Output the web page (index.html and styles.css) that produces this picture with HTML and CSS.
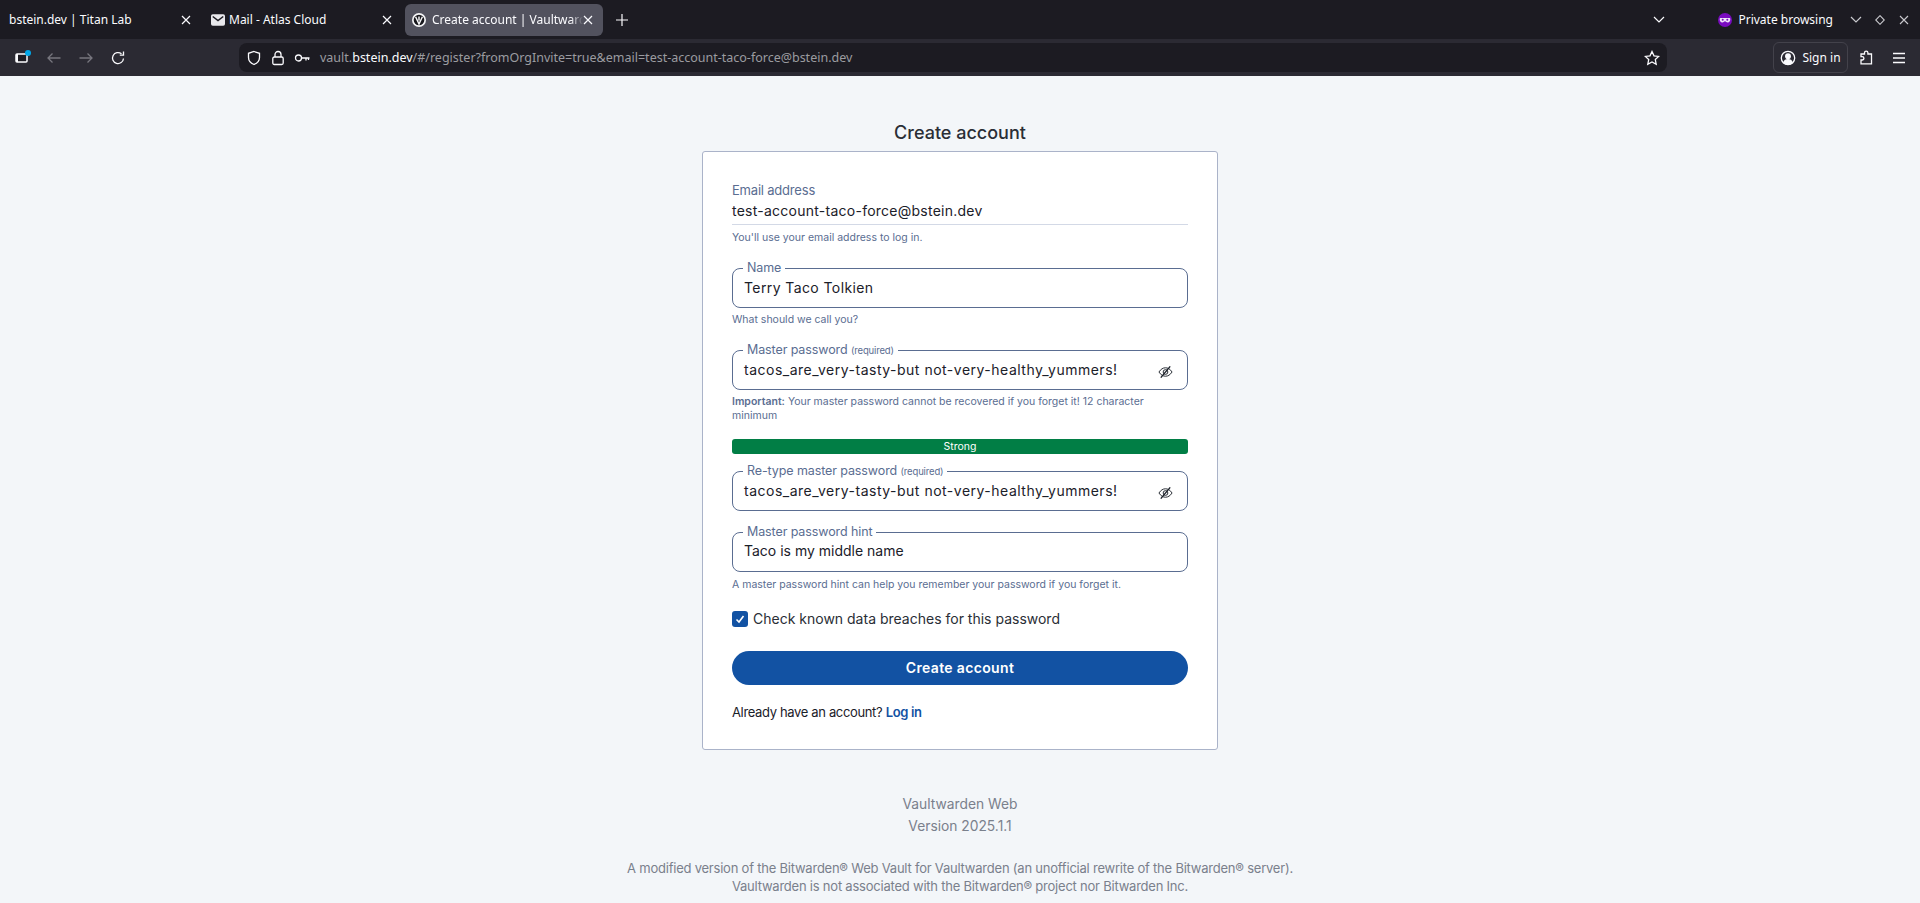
FILE: index.html
```html
<!DOCTYPE html>
<html lang="en">

<head>
    <meta charset="UTF-8">
    <title>Create account | Vaultwarden Web</title>
    <link rel="stylesheet" href="styles.css">
</head>

<body>

    <!-- tabs -->
    <div class="tabstrip">
        <div class="tab tab-first">
            <span class="tab-title">bstein.dev | Titan Lab</span>
            <svg class="tab-close" viewBox="0 0 10 10"><path d="M1 1l8 8M9 1l-8 8"/></svg>
        </div>
        <div class="tab tab-second">
            <svg class="tab-icon" viewBox="0 0 12 10"><rect width="12" height="10" rx="1.500" fill="#e8e8ec"/><path d="M1.500 2l4.500 3.500L10.500 2" fill="none" stroke="#1c1b22" stroke-width="1.300"/></svg>
            <span class="tab-title">Mail - Atlas Cloud</span>
            <svg class="tab-close" viewBox="0 0 10 10"><path d="M1 1l8 8M9 1l-8 8"/></svg>
        </div>
        <div class="tab tab-active">
            <svg class="tab-icon" viewBox="0 0 14 14"><circle cx="7" cy="7" r="7" fill="#f4f4f6"/><circle cx="7" cy="7" r="5.300" fill="#17171c"/><path d="M3.600 3.800L7 11l3.400-7.200M7 3.500v4" fill="none" stroke="#f4f4f6" stroke-width="1.500"/></svg>
            <span class="tab-title tab-fade">Create account | Vaultwarden Web</span>
            <svg class="tab-close" viewBox="0 0 10 10"><path d="M1 1l8 8M9 1l-8 8"/></svg>
        </div>
        <svg class="new-tab" viewBox="0 0 12 12"><path d="M6 0v12M0 6h12"/></svg>
        <div class="strip-right">
            <svg class="chev list-tabs" viewBox="0 0 12 7"><path d="M1 1l5 5 5-5"/></svg>
            <div class="private">
                <svg class="mask" viewBox="0 0 14 14"><circle cx="7" cy="7" r="7" fill="#7a0bc0"/><path d="M2.500 5h9c.5 0 .8.400.8 1 0 2-1 3.500-2.500 3.500-1.300 0-1.800-1.300-2.800-1.300S5.500 9.500 4.200 9.500C2.700 9.500 1.700 8 1.700 6c0-.6.300-1 .8-1z" fill="#f0e6fa"/><circle cx="4.700" cy="6.700" r="1" fill="#7a0bc0"/><circle cx="9.300" cy="6.700" r="1" fill="#7a0bc0"/></svg>
                <span>Private browsing</span>
            </div>
            <svg class="chev win-min" viewBox="0 0 12 7"><path d="M1 1l5 5 5-5"/></svg>
            <svg class="win-max" viewBox="0 0 10 10"><path d="M5 .7L9.300 5 5 9.300.7 5z"/></svg>
            <svg class="win-close" viewBox="0 0 10 10"><path d="M1 1l8 8M9 1l-8 8"/></svg>
        </div>
    </div>

    <!-- toolbar -->
    <div class="toolbar">
        <div class="nav-icons">
            <div class="sidebar-btn">
                <svg viewBox="0 0 13 10"><rect x="1" y="1" width="11" height="8" rx="1" fill="#1c1b22" stroke="#fbfbfe" stroke-width="1.500"/><rect x="1" y="1" width="2" height="8" fill="#fbfbfe"/></svg>
                <i class="dot"></i>
            </div>
            <svg class="ico dim" viewBox="0 0 16 16"><path d="M14.500 8H2M6.500 3.500L2 8l4.500 4.500"/></svg>
            <svg class="ico dim" viewBox="0 0 16 16"><path d="M1.500 8H14M9.500 3.500L14 8l-4.500 4.500"/></svg>
            <svg class="ico" viewBox="0 0 16 16"><path d="M13.500 8.500A5.500 5.500 0 1 1 11.500 3.800"/><path d="M13.500 1.500v3.700H9.800"/></svg>
        </div>
        <div class="urlbar">
            <svg class="ico ico-shield" viewBox="0 0 16 16"><path d="M8 1.500l5.500 1.800v4.200c0 3.500-2.500 5.800-5.500 7-3-1.200-5.500-3.500-5.500-7V3.300z"/></svg>
            <svg class="ico ico-lock" viewBox="0 0 16 16"><rect x="2.800" y="7" width="10.400" height="7.500" rx="1.500"/><path d="M5 7V4.500a3 3 0 0 1 6 0V7"/></svg>
            <svg class="ico ico-key" viewBox="0 0 16 16"><circle cx="4.500" cy="8" r="3"/><path d="M7.500 8h8M12 8v2.500M14.500 8v2"/></svg>
            <span class="url"><span class="url-dim">vault.</span>bstein.dev<span class="url-dim">/#/register?fromOrgInvite=true&amp;email=test-account-taco-force@bstein.dev</span></span>
            <svg class="ico ico-star" viewBox="0 0 16 16"><path d="M8 1.500l2 4.300 4.700.6-3.400 3.200.9 4.700L8 12l-4.200 2.300.9-4.700L1.300 6.400 6 5.800z"/></svg>
        </div>
        <div class="signin">
            <svg class="ico" viewBox="0 0 16 16"><circle cx="8" cy="8" r="6.700"/><circle cx="8" cy="6.300" r="2.300" fill="#fbfbfe"/><path d="M3.800 12.700c.6-2 2.300-3 4.200-3s3.600 1 4.200 3a6.500 6.500 0 0 1-8.400 0z" fill="#fbfbfe"/></svg>
            <span>Sign in</span>
        </div>
        <svg class="ico ico-ext" viewBox="0 0 16 16"><path d="M6.500 2.800a1.700 1.700 0 0 1 3.400 0V4h3.600v9.800H3V10h1.200a1.700 1.700 0 0 0 0-3.400H3V4h3.500z"/></svg>
        <svg class="ico ico-menu" viewBox="0 0 16 16"><path d="M2 3.500h12M2 8h12M2 12.500h12"/></svg>
    </div>

    <!-- page -->
    <div class="page">
        <h1 class="page-title">Create account</h1>

        <div class="card">
            <div class="readonly">
                <div class="readonly-label">Email address</div>
                <div class="readonly-value">test-account-taco-force@bstein.dev</div>
            </div>
            <div class="hint">You'll use your email address to log in.</div>

            <fieldset class="field field-name">
                <legend>Name</legend>
                <div class="field-value">Terry Taco Tolkien</div>
            </fieldset>
            <div class="hint">What should we call you?</div>

            <fieldset class="field field-master">
                <legend>Master password <small>(required)</small></legend>
                <div class="field-value">tacos_are_very-tasty-but not-very-healthy_yummers!</div>
                <svg class="eye" viewBox="0 0 16 14"><path d="M1 7c2-3 4.300-4.500 7-4.500S13 4 15 7c-2 3-4.300 4.500-7 4.500S3 10 1 7z"/><circle cx="8" cy="7" r="2.500"/><path d="M13 1L3 13" stroke-width="1.500"/></svg>
            </fieldset>
            <div class="hint hint-two"><b>Important:</b> Your master password cannot be recovered if you forget it! 12 character minimum</div>

            <div class="strength">Strong</div>

            <fieldset class="field field-retype">
                <legend>Re-type master password <small>(required)</small></legend>
                <div class="field-value">tacos_are_very-tasty-but not-very-healthy_yummers!</div>
                <svg class="eye" viewBox="0 0 16 14"><path d="M1 7c2-3 4.300-4.500 7-4.500S13 4 15 7c-2 3-4.300 4.500-7 4.500S3 10 1 7z"/><circle cx="8" cy="7" r="2.500"/><path d="M13 1L3 13" stroke-width="1.500"/></svg>
            </fieldset>

            <fieldset class="field field-hint">
                <legend>Master password hint</legend>
                <div class="field-value">Taco is my middle name</div>
            </fieldset>
            <div class="hint hint-last">A master password hint can help you remember your password if you forget it.</div>

            <div class="check-row">
                <span class="checkbox"><svg viewBox="0 0 10 10"><path d="M1.500 5.500l2.500 2.500 4.500-6"/></svg></span>
                <span>Check known data breaches for this password</span>
            </div>

            <div class="submit">Create account</div>

            <div class="login-row">Already have an account? <a href="#">Log in</a></div>
        </div>

        <div class="footer">
            <div class="footer-name">Vaultwarden Web</div>
            <div class="footer-version">Version 2025.1.1</div>
            <div class="footer-note">A modified version of the Bitwarden® Web Vault for Vaultwarden (an unofficial rewrite of the Bitwarden® server).</div>
            <div class="footer-note">Vaultwarden is not associated with the Bitwarden® project nor Bitwarden Inc.</div>
        </div>
    </div>

</body>

</html>
```

FILE: styles.css
```css
* {
    padding: 0;
    margin: 0;
    box-sizing: border-box;
}

html,
body {
    height: 903px;
    overflow: hidden;
}

body {
    background: #f3f6f9;
    font-family: "Inter", "Liberation Sans", sans-serif;
}

/* browser chrome */
.tabstrip {
    height: 39px;
    background: #1c1b22;
    display: flex;
    align-items: center;
    font-family: "Noto Sans", sans-serif;
    font-size: 12px;
    color: #fbfbfe;
}

.tab {
    height: 32px;
    display: flex;
    align-items: center;
    border-radius: 6px;
    flex: none;
}

.tab-first {
    width: 197px;
    padding: 0 6px 0 9px;
}

.tab-second {
    width: 199px;
    margin-left: 4px;
    padding: 0 8px 0 10px;
}

.tab-active {
    width: 198px;
    margin-left: 5px;
    padding: 0 10px 0 7px;
    background: #52525e;
}

.tab-icon {
    width: 14px;
    height: 12px;
    margin-right: 6px;
    flex: none;
}

.tab-second .tab-icon {
    margin-right: 4px;
}

.tab-active .tab-icon {
    height: 14px;
}

.tab-title {
    flex: 1;
    white-space: nowrap;
    overflow: hidden;
}

.tab-fade {
    -webkit-mask-image: linear-gradient(to right, #000 92%, transparent 100%);
    mask-image: linear-gradient(to right, #000 92%, transparent 100%);
}

.tab-close {
    width: 10px;
    height: 10px;
    flex: none;
    stroke: #fbfbfe;
    stroke-width: 1.2;
    fill: none;
}

.new-tab {
    width: 12px;
    height: 12px;
    margin-left: 13px;
    stroke: #fbfbfe;
    stroke-width: 1.2;
    fill: none;
}

.strip-right {
    margin-left: auto;
    display: flex;
    align-items: center;
    padding-right: 11px;
}

.chev {
    width: 12px;
    height: 7px;
    stroke: #fbfbfe;
    stroke-width: 1.2;
    fill: none;
}

.list-tabs {
    margin-right: 53px;
}

.private {
    display: flex;
    align-items: center;
    gap: 6px;
    margin-right: 17px;
}

.mask {
    width: 14px;
    height: 14px;
}

.win-min {
    stroke: #c9c9ce;
    margin-right: 13px;
}

.win-max,
.win-close {
    width: 10px;
    height: 10px;
    stroke: #c9c9ce;
    stroke-width: 1.1;
    fill: none;
}

.win-max {
    margin-right: 14px;
}

.toolbar {
    height: 37px;
    background: #2b2a33;
    display: flex;
    align-items: center;
    color: #fbfbfe;
    font-family: "Noto Sans", sans-serif;
}

.ico {
    width: 16px;
    height: 16px;
    flex: none;
    stroke: #fbfbfe;
    stroke-width: 1.3;
    fill: none;
}

.ico.dim {
    stroke: #77767e;
}

.nav-icons {
    width: 239px;
    padding-left: 15px;
    display: flex;
    align-items: center;
    gap: 16px;
}

.sidebar-btn {
    position: relative;
    width: 13px;
    height: 10px;
    flex: none;
    margin-right: 2px;
}

.sidebar-btn svg {
    display: block;
    width: 13px;
    height: 10px;
}

.dot {
    position: absolute;
    top: -3px;
    right: -3px;
    width: 6px;
    height: 6px;
    border-radius: 50%;
    background: #00a6e8;
}

.urlbar {
    width: 1428px;
    height: 29px;
    background: #1c1b22;
    border-radius: 8px;
    display: flex;
    align-items: center;
    padding: 0 7px 0 7px;
    font-size: 12.5px;
}

.ico-lock {
    margin-left: 8px;
}

.ico-key {
    margin-left: 8px;
}

.url {
    margin-left: 10px;
    flex: 1;
    white-space: nowrap;
}

.url-dim {
    color: #9b9ba0;
}

.signin {
    width: 75px;
    height: 31px;
    margin-left: 106px;
    border: 1px solid #43424b;
    border-radius: 6px;
    display: flex;
    align-items: center;
    justify-content: center;
    gap: 6px;
    font-size: 12px;
}

.ico-ext {
    margin-left: 10px;
}

.ico-menu {
    margin-left: 17px;
}

/* page */
.page {
    width: 516px;
    margin: 0 auto;
}

.page-title {
    margin-top: 46px;
    height: 29px;
    line-height: 22px;
    font-size: 18px;
    font-weight: 500;
    text-align: center;
    color: #2a2e36;
}

.card {
    height: 599px;
    background: #fff;
    border: 1px solid #aab3c9;
    border-radius: 3px;
    padding: 30px 29px 0;
}

.readonly {
    height: 43px;
    border-bottom: 1px solid #d3d9e6;
}

.readonly-label {
    font-size: 13px;
    line-height: 16px;
    margin-bottom: 2px;
    letter-spacing: -0.2px;
    color: #5a6d91;
}

.readonly-value {
    font-size: 14px;
    line-height: 22px;
    letter-spacing: 0.25px;
    color: #1b2029;
}

.hint {
    font-size: 10.5px;
    line-height: 14px;
    color: #5a6d91;
    margin-top: 6px;
}

.field + .hint {
    margin-top: 5px;
}

.field + .hint-last {
    margin-top: 6px;
}

.hint b {
    font-weight: 600;
}

.hint-two {
    width: 420px;
}

.field {
    position: relative;
    border: 1px solid #5a6d91;
    border-radius: 8px;
    padding: 0 10px;
    height: 48px;
    margin-top: 15px;
}

.field legend {
    padding: 0 4px;
    font-size: 12.5px;
    line-height: 16px;
    letter-spacing: -0.1px;
    color: #5a6d91;
}

.field legend small {
    font-size: 9.5px;
    letter-spacing: -0.15px;
}

.field-value {
    font-size: 14px;
    line-height: 22px;
    padding-left: 1px;
    color: #1b2029;
    white-space: nowrap;
}

.field-name .field-value {
    padding-top: 1px;
    letter-spacing: 0.4px;
}

.field-master .field-value,
.field-retype .field-value {
    letter-spacing: 0.5px;
}

.eye {
    position: absolute;
    right: 14px;
    top: 6px;
    width: 15px;
    height: 14px;
    stroke: #1b2029;
    stroke-width: 1;
    fill: none;
}

.strength {
    height: 15px;
    margin-top: 16px;
    background: #017e45;
    border-radius: 3px;
    text-align: center;
    color: #fff;
    font-size: 10.5px;
    line-height: 15px;
}

.field-retype {
    margin-top: 9px;
}

.field-hint {
    margin-top: 13px;
}

.check-row {
    display: flex;
    align-items: center;
    gap: 5px;
    margin-top: 18px;
    font-size: 14px;
    line-height: 18px;
    color: #2a2e36;
}

.checkbox {
    width: 16px;
    height: 16px;
    background: #1252a3;
    border-radius: 3px;
    display: flex;
    align-items: center;
    justify-content: center;
    flex: none;
}

.checkbox svg {
    width: 10px;
    height: 10px;
    stroke: #fff;
    stroke-width: 1.6;
    fill: none;
}

.submit {
    height: 34px;
    margin-top: 23px;
    border-radius: 17px;
    background: #1252a3;
    color: #fff;
    text-align: center;
    font-size: 14px;
    font-weight: 600;
    letter-spacing: 0.35px;
    line-height: 34px;
}

.login-row {
    margin-top: 17px;
    font-size: 13px;
    line-height: 20px;
    letter-spacing: -0.35px;
    color: #1b2029;
}

.login-row a {
    color: #1252a3;
    font-weight: 600;
    text-decoration: none;
}

.footer {
    text-align: center;
    color: #7a808c;
    font-size: 13.8px;
    white-space: nowrap;
    margin-left: -100px;
    margin-right: -100px;
}

.footer-name {
    margin-top: 44px;
    line-height: 20px;
}

.footer-version {
    margin-top: 2px;
    line-height: 20px;
}

.footer-note {
    font-size: 13px;
    letter-spacing: -0.22px;
    line-height: 18px;
}

.footer-version + .footer-note {
    margin-top: 23px;
}
```
